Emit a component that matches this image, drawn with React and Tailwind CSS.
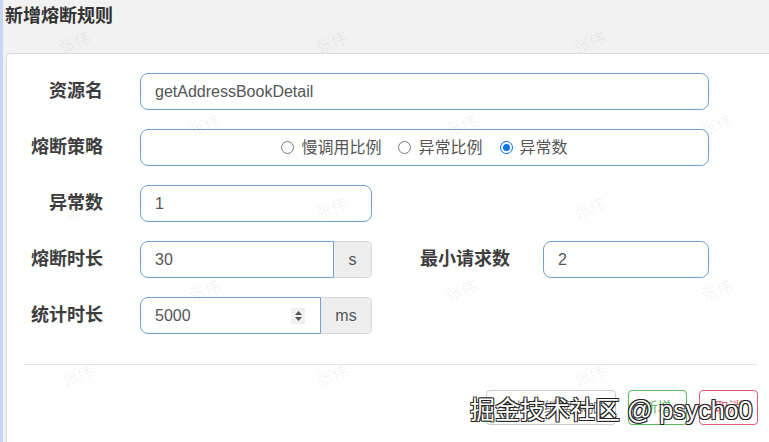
import React from 'react';

const FONT = { fontFamily: '"Liberation Sans", "Noto Sans CJK SC", sans-serif' };

const marks = [
  [75, 42], [332, 42], [590, 42],
  [205, 125], [462, 125], [717, 125],
  [80, 208], [332, 208], [590, 208],
  [205, 290], [462, 290], [717, 290],
  [78, 375], [333, 375], [590, 375],
];

function Label({ children, className = '' }) {
  return (
    <div className={`shrink-0 text-right text-[18px] font-bold text-[#3d3d3d] ${className}`}>{children}</div>
  );
}

function Radio({ checked, children }) {
  return (
    <span className="flex items-center gap-[7px]">
      {checked ? (
        <span className="w-[13px] h-[13px] rounded-full bg-[#0a74f0] flex items-center justify-center">
          <span className="w-[7px] h-[7px] rounded-full bg-[#0a74f0] ring-2 ring-white" />
        </span>
      ) : (
        <span className="w-[13px] h-[13px] rounded-full border border-[#777] bg-white" />
      )}
      <span>{children}</span>
    </span>
  );
}

export default function App() {
  return (
    <div style={FONT} className="relative w-[769px] h-[442px] overflow-hidden bg-[#f2f2f2] flex">
      {/* left accent strip */}
      <div className="w-[3px] shrink-0 bg-[#c8d6f6]" />

      <div className="flex-1 flex flex-col">
        {/* header */}
        <div className="h-[53px] shrink-0 pl-[2px] pt-[4px]">
          <h2 className="text-[18px] font-bold text-[#333] leading-[25px]">新增熔断规则</h2>
        </div>

        {/* panel */}
        <div className="flex-1 ml-[3px] bg-white border-l border-t border-[#dcdcdc] rounded-tl-[5px] pt-[19px]">
          <div className="flex flex-col gap-[19px] text-[16px] text-[#555]">
            {/* 资源名 */}
            <div className="flex items-center h-[37px]">
              <Label className="w-[96px] mr-[37px]">资源名</Label>
              <div className="w-[569px] h-[37px] border border-[#72a2d2] rounded-[8px] flex items-center px-[14px]">
                getAddressBookDetail
              </div>
            </div>

            {/* 熔断策略 */}
            <div className="flex items-center h-[37px]">
              <Label className="w-[96px] mr-[37px]">熔断策略</Label>
              <div className="w-[569px] h-[37px] border border-[#72a2d2] rounded-[8px] flex items-center justify-center gap-[17px]">
                <Radio>慢调用比例</Radio>
                <Radio>异常比例</Radio>
                <Radio checked>异常数</Radio>
              </div>
            </div>

            {/* 异常数 */}
            <div className="flex items-center h-[37px]">
              <Label className="w-[96px] mr-[37px]">异常数</Label>
              <div className="w-[232px] h-[37px] border border-[#72a2d2] rounded-[8px] flex items-center px-[14px]">1</div>
            </div>

            {/* 熔断时长 / 最小请求数 */}
            <div className="flex items-center h-[37px]">
              <Label className="w-[96px] mr-[37px]">熔断时长</Label>
              <div className="flex w-[232px] h-[37px]">
                <div className="flex-1 border border-[#72a2d2] rounded-l-[8px] flex items-center px-[14px]">30</div>
                <div className="w-[38px] bg-[#eeeeee] border border-l-0 border-[#d6d6d6] rounded-r-[5px] flex items-center justify-center text-[#555]">s</div>
              </div>
              <Label className="w-[138px] mr-[33px]">最小请求数</Label>
              <div className="w-[166px] h-[37px] border border-[#72a2d2] rounded-[8px] flex items-center px-[14px]">2</div>
            </div>

            {/* 统计时长 */}
            <div className="flex items-center h-[37px]">
              <Label className="w-[96px] mr-[37px]">统计时长</Label>
              <div className="flex w-[232px] h-[37px]">
                <div className="flex-1 border border-[#72a2d2] rounded-l-[8px] flex items-center pl-[14px] pr-[15px]">
                  <span className="flex-1">5000</span>
                  <span className="w-[14px] h-[16px] bg-[#f0f0f0] flex flex-col items-center justify-center gap-[2px]">
                    <svg width="7" height="4" viewBox="0 0 7 4"><path d="M0 4 L3.5 0 L7 4 Z" fill="#555" /></svg>
                    <svg width="7" height="4" viewBox="0 0 7 4"><path d="M0 0 L3.5 4 L7 0 Z" fill="#555" /></svg>
                  </span>
                </div>
                <div className="w-[51px] bg-[#eeeeee] border border-l-0 border-[#d6d6d6] rounded-r-[5px] flex items-center justify-center text-[#555]">ms</div>
              </div>
            </div>
          </div>

          <div className="mt-[30px] ml-[17px] mr-[12px] h-px bg-[#e3e3e3]" />

          <div className="flex justify-end gap-[12px] mt-[25px] pr-[11px] text-[14px]">
            <button className="w-[130px] h-[35px] rounded-[4px] border border-[#cccccc] bg-white text-[#777]">新增并继续添加</button>
            <button className="w-[59px] h-[35px] rounded-[4px] border border-[#5cb85c] bg-white text-[#5cb85c]">新增</button>
            <button className="w-[59px] h-[35px] rounded-[4px] border border-[#e0607a] bg-white text-[#e0607a]">取消</button>
          </div>
        </div>
      </div>

      {/* faint watermarks */}
      {marks.map(([x, y], i) => (
        <span
          key={i}
          className="absolute text-[16px] text-black/[0.06] -rotate-[20deg] pointer-events-none select-none"
          style={{ left: x - 16, top: y - 11 }}
        >
          张伟
        </span>
      ))}

      {/* site watermark */}
      <span className="absolute left-[470px] top-[395px] text-[25px] leading-[30px] text-white [text-shadow:1px_1px_0_#222,-1px_-1px_0_#222,1px_-1px_0_#222,-1px_1px_0_#222] pointer-events-none whitespace-nowrap">
        掘金技术社区 @ psycho0
      </span>
    </div>
  );
}
